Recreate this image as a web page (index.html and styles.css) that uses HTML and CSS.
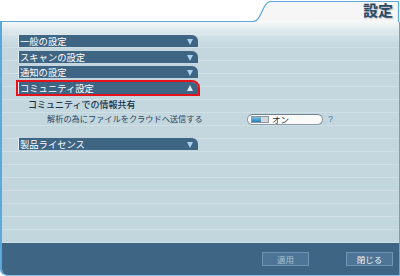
FILE: index.html
```html
<html lang="ja">
  <head>
    <meta charset="UTF-8" />
    <title>設定</title>
    <link rel="stylesheet" href="styles.css">
  </head>
  <body>
    <div class="window">
      <div class="header">
        <svg class="tab-line" width="400" height="22" viewBox="0 0 400 22">
          <path d="M0 21.5 H253 C262 21.5 262 1.5 271 1.5 H398.5 V22" fill="#f6f6f6" stroke="#5aa8dc" stroke-width="1.2" />
        </svg>
        <span class="title">設定</span>
      </div>
      <div class="frame">
        <div class="panel">
          <div class="sections">
            <div class="bar"><span>一般の設定</span><i class="arrow down"></i></div>
            <div class="bar"><span>スキャンの設定</span><i class="arrow down"></i></div>
            <div class="bar"><span>通知の設定</span><i class="arrow down"></i></div>
            <div class="bar selected"><span>コミュニティ設定</span><i class="arrow up"></i></div>
          </div>
          <div class="sub-heading">コミュニティでの情報共有</div>
          <div class="option-row">
            <span class="option-label">解析の為にファイルをクラウドへ送信する</span>
            <span class="toggle">
              <span class="switch"><b></b></span>
              <span class="toggle-text">オン</span>
            </span>
            <span class="help">?</span>
          </div>
          <div class="bar license"><span>製品ライセンス</span><i class="arrow down"></i></div>
        </div>
        <div class="footer">
          <button class="btn disabled">適用</button>
          <button class="btn">閉じる</button>
        </div>
      </div>
    </div>
  </body>
</html>
```
FILE: styles.css
```css
/* page */
body {
  margin: 0;
  padding: 0;
  background: #ffffff;
}

.window {
  width: 400px;
  height: 276px;
  display: flex;
  flex-direction: column;
  font-family: "Noto Sans CJK JP", "Noto Sans", sans-serif;
  background: #ffffff;
}

/* header with the tab */
.header {
  height: 22px;
  position: relative;
  display: flex;
  justify-content: flex-end;
  flex-shrink: 0;
}

.tab-line {
  position: absolute;
  left: 0;
  top: 0;
}

.title {
  position: relative;
  font-size: 15px;
  line-height: 22px;
  margin-right: 7px;
  margin-top: -1px;
  color: #2d4b63;
  font-weight: bold;
  text-shadow: 1px 1px 1px rgba(90, 110, 130, 0.45);
}

/* main frame */
.frame {
  flex: 1;
  display: flex;
  flex-direction: column;
  border-left: 2px solid #5aa8dc;
  border-right: 1px solid #5aa8dc;
  border-bottom: 1px solid #8cc4e6;
  border-bottom-left-radius: 7px;
  overflow: hidden;
}

.panel {
  flex: 1;
  padding: 13px 0 0 16px;
  background:
    repeating-linear-gradient(to bottom, transparent 0, transparent 12px, rgba(230, 240, 246, 0.35) 12px, rgba(230, 240, 246, 0.35) 13px),
    linear-gradient(to bottom, #f6f7f8 0, #d9e6eb 10px, #c4d7df 24px, #c2d6de 100%);
}

/* section bars */
.sections {
  display: flex;
  flex-direction: column;
  gap: 3.5px;
}

.bar {
  width: 180px;
  height: 12px;
  display: flex;
  align-items: center;
  justify-content: space-between;
  background: #3f6584;
  border-left: 1px solid #e4eef3;
  border-top-right-radius: 6px;
  color: #ffffff;
  font-size: 9.3px;
  line-height: 12px;
  padding-left: 1px;
  box-sizing: border-box;
}

.bar.selected {
  outline: 2px solid #e3121b;
}

.arrow {
  width: 0;
  height: 0;
  margin-right: 5px;
  border-left: 3.5px solid transparent;
  border-right: 3.5px solid transparent;
}

.arrow.down {
  border-top: 6px solid #aad2ef;
  margin-top: 2px;
}

.arrow.up {
  border-bottom: 6px solid #dfeef8;
}

/* community section */
.sub-heading {
  margin-top: 5px;
  padding-left: 10px;
  height: 12px;
  line-height: 12px;
  font-size: 9px;
  color: #17344c;
  font-weight: 500;
}

.option-row {
  display: flex;
  align-items: center;
  height: 13px;
  margin-top: 1px;
  font-size: 8.2px;
  color: #2a4660;
}

.option-label {
  width: 229px;
  padding-left: 29px;
  box-sizing: border-box;
  white-space: nowrap;
}

.toggle {
  width: 76px;
  height: 11px;
  display: flex;
  align-items: center;
  background: #fafafa;
  border: 1px solid #8c9aa6;
  border-top-color: #6f7f8c;
  border-radius: 6px;
  box-sizing: border-box;
  padding-left: 3px;
  margin-top: 2px;
}

.switch {
  width: 18px;
  height: 7px;
  display: flex;
  background: #d4d6d8;
  border: 1px solid #8a96a0;
  box-sizing: border-box;
}

.switch b {
  width: 9px;
  background: linear-gradient(to bottom, #7fc0e4, #2a7fb3);
}

.toggle-text {
  margin-left: 3px;
  font-size: 8.5px;
  color: #1f2f3c;
}

.help {
  margin-left: 5px;
  color: #3a7ab0;
  font-family: "Liberation Sans", sans-serif;
  font-size: 9px;
  margin-top: 1px;
}

.bar.license {
  margin-top: 13px;
}

/* footer buttons */
.footer {
  height: 32px;
  flex-shrink: 0;
  display: flex;
  justify-content: flex-end;
  align-items: center;
  gap: 37px;
  padding-right: 6px;
  background: #3f6584;
}

.btn {
  width: 47px;
  height: 14px;
  padding: 0;
  background: #4e7596;
  border: 1px solid #7094b1;
  color: #eef4f8;
  font-family: "Noto Sans CJK JP", sans-serif;
  font-size: 8.5px;
  line-height: 12px;
}

.btn.disabled {
  color: #a6c0d4;
}
```
